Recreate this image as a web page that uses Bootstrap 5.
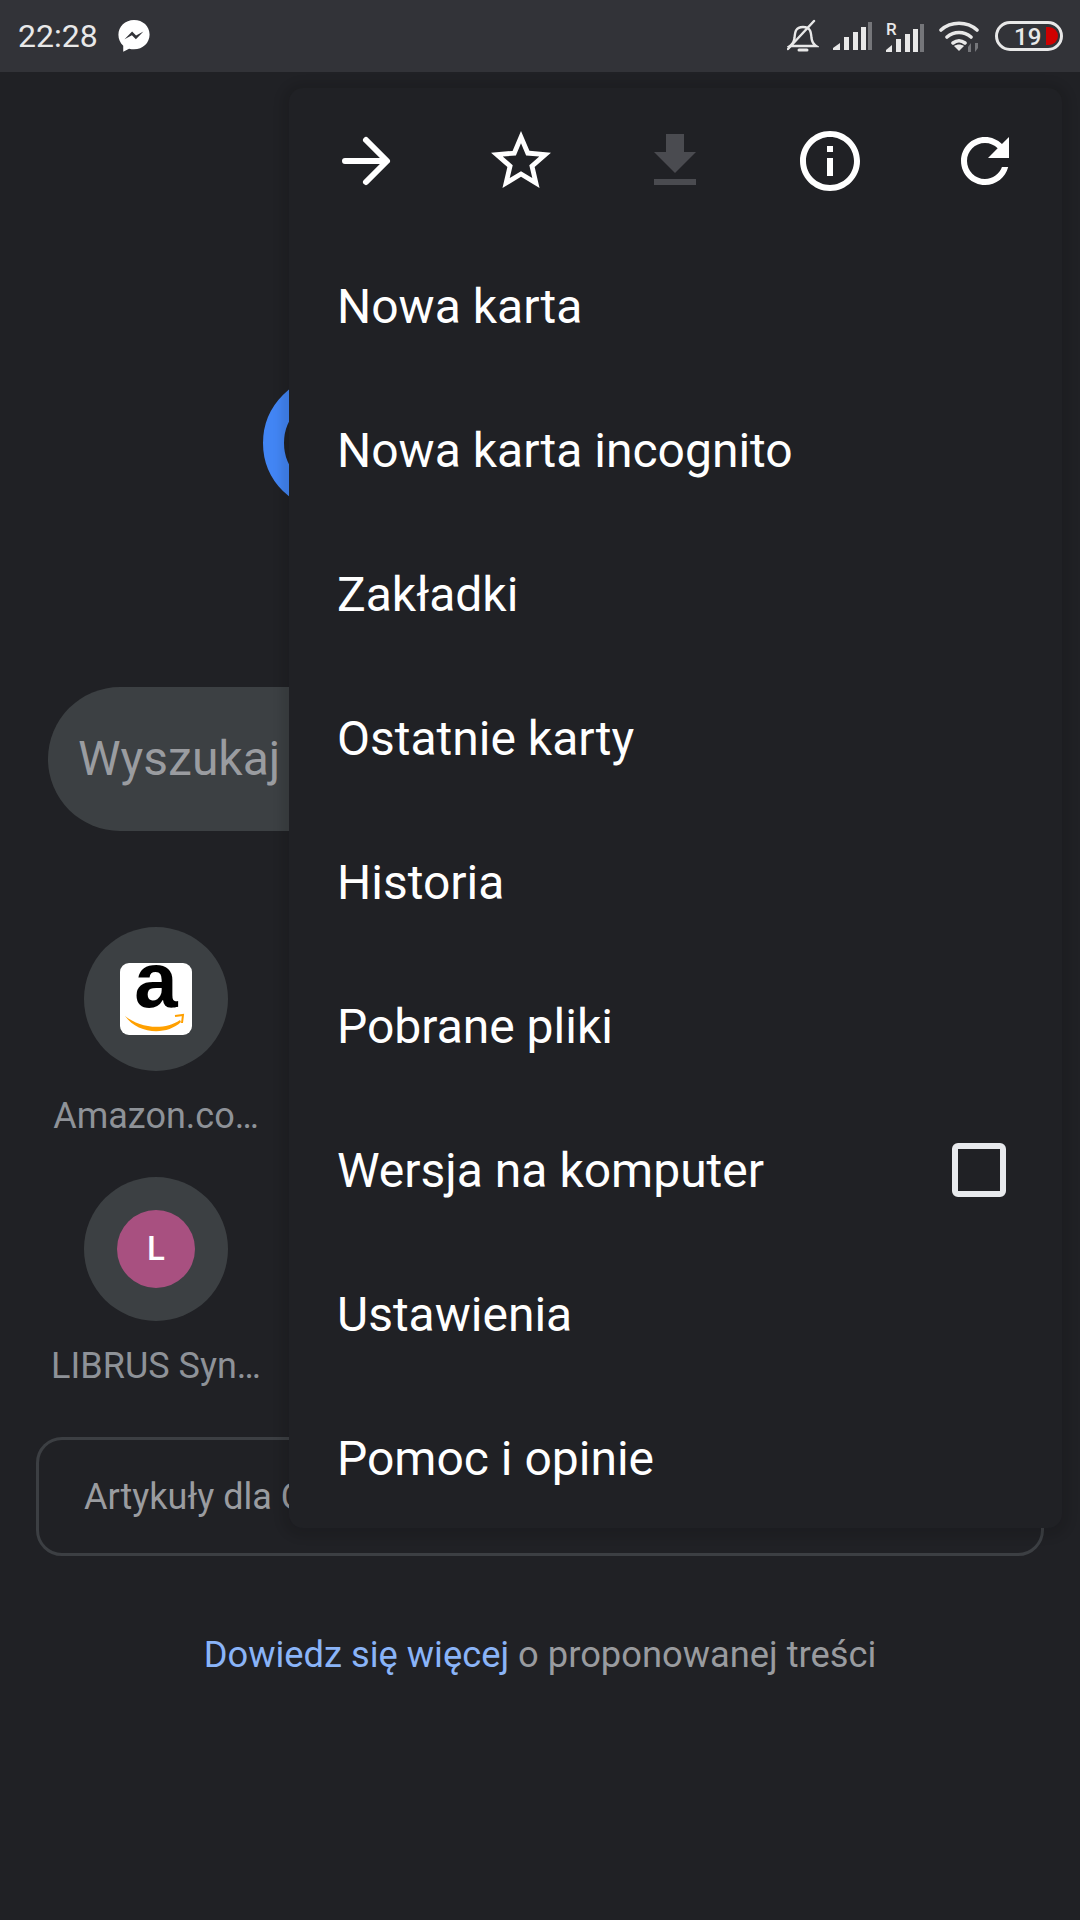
<!DOCTYPE html>
<html lang="pl">
<head>
<meta charset="utf-8">
<title>Chrome menu</title>
<link href="https://cdn.jsdelivr.net/npm/bootstrap@5.3.0/dist/css/bootstrap.min.css" rel="stylesheet">
<style>
  html, body { width: 1080px; height: 1920px; overflow: hidden; }
  body { background: #202125; font-family: Roboto, "Liberation Sans", sans-serif; position: relative; }

  .status-strip { height: 72px; background: #323338; color: #e8e8e8; padding: 0 17px 0 18px; }
  .status-time { font-size: 32px; line-height: 72px; width: 99px; }
  .status-icons { gap: 14px; }

  .home-col { padding: 303px 36px 0; }
  .logo-ring { display: block; margin-left: 227px; }
  .search-pill { height: 144px; margin: 176px 0 0 12px; width: 500px; border-radius: 72px; background: #3c4043; color: #9a9ca0; font-size: 48px; padding-left: 30px; }
  .tiles { margin: 96px 0 0 12px; width: 216px; }
  .tile { height: 250px; }
  .tile-round { width: 144px; height: 144px; border-radius: 50%; background: #3c4043; }
  .tile-name { font-size: 36px; line-height: 44px; margin-top: 23px; color: #8e9298; white-space: nowrap; }
  .amazon-box { width: 72px; height: 72px; border-radius: 9px; background: #fff; position: relative; }
  .amazon-a { font-family: "Liberation Sans", sans-serif; font-weight: 700; font-size: 78px; line-height: 41px; margin-top: -3px; color: #000; display: block; text-align: center; }
  .amazon-box svg { position: absolute; left: 0; top: 0; }
  .letter-round { width: 78px; height: 78px; border-radius: 50%; background: #a85080; color: #fff; font-size: 33px; font-weight: 500; }
  .articles-box { height: 119px; margin-top: 10px; border: 3px solid #3c3f43; border-radius: 26px; padding-left: 45px; color: #9a9ca0; font-size: 36px; }
  .learn-line { margin-top: 75px; font-size: 36.300px; line-height: 48px; color: #999b9f; }
  .learn-line a { color: #8ab4f8; text-decoration: none; }

  .chrome-menu { position: absolute; left: 289px; top: 88px; width: 773px; height: 1440px; background: #202125; border-radius: 14px; box-shadow: 0 2px 8px 8px rgba(0, 0, 0, .1); }
  .menu-tools { height: 146px; }
  .tool-btn { width: 155.400px; }
  .menu-row { height: 144px; padding: 2px 56px 0 48px; background: transparent; border: 0; border-radius: 0; color: #fff; font-size: 48px; }
  .menu-row .form-check-input { width: 54px; height: 54px; margin: -3px 0 0; background-color: transparent; border: 6px solid #e8eaed; border-radius: 6px; }
</style>
</head>
<body>

<div class="status-strip d-flex align-items-center justify-content-between">
  <div class="d-flex align-items-center">
    <span class="status-time">22:28</span>
    <svg width="34" height="34" viewBox="0 0 36 36">
      <path d="M18 1C8.600 1 1.500 7.800 1.500 16.700c0 4.700 1.900 8.700 5.100 11.500v6.600l6.200-3.400c1.600.5 3.400.7 5.200.7 9.400 0 16.500-6.800 16.500-15.700S27.400 1 18 1z" fill="#fff"/>
      <path d="M8 21.500l8-8.300 4.200 4.200 7.800-4.200-8 8.300-4.200-4.200z" fill="#323338"/>
    </svg>
  </div>
  <div class="status-icons d-flex align-items-center">
    <svg width="32" height="34" viewBox="0 0 32 34" fill="none" stroke="#e8e8e8" stroke-width="2.400">
      <path d="M3 27c3-2 4-4 4.500-8 .5-6 1-11 8.500-11s8 5 8.500 11c.5 4 1.500 6 4.500 8z"/>
      <path d="M1 30L27 2" stroke-linecap="round"/>
      <path d="M12 31h8" stroke-width="3" stroke-linecap="round"/>
    </svg>
    <svg width="39" height="28" viewBox="0 0 39 28">
      <path d="M0 28v-2l7-5v7z" fill="#e8e8e8"/><rect x="11" y="15" width="5" height="13" fill="#e8e8e8"/><rect x="20" y="10" width="5" height="18" fill="#e8e8e8"/><rect x="28" y="5" width="5" height="23" fill="#e8e8e8"/><rect x="35" y="0" width="4" height="28" fill="#75767a"/>
    </svg>
    <svg width="39" height="36" viewBox="0 0 39 36">
      <text x="0" y="17" font-family="Roboto, sans-serif" font-size="17" font-weight="500" fill="#e8e8e8">R</text>
      <path d="M0 34v-2l6-5v7z" fill="#e8e8e8"/><rect x="10" y="21" width="5" height="13" fill="#e8e8e8"/><rect x="19" y="16" width="5" height="18" fill="#e8e8e8"/><rect x="27" y="11" width="5" height="23" fill="#e8e8e8"/><rect x="34" y="6" width="4" height="28" fill="#75767a"/>
    </svg>
    <svg width="42" height="32" viewBox="0 0 42 32" fill="none">
      <path d="M2 10C12 1 28 1 38 10M8 17c7-6 17-6 24 0M14 23c4-3 8-3 12 0" stroke="#e8e8e8" stroke-width="3.600" stroke-linecap="round"/>
      <path d="M20 31l-5-5c3-2 7-2 10 0z" fill="#e8e8e8"/>
      <path d="M32 32v-9l-3 4v5zM36 23v9l3-4v-5z" fill="#75767a"/>
    </svg>
    <svg width="68" height="32" viewBox="0 0 68 32" class="d-block">
      <rect x="1.500" y="2.500" width="65" height="27" rx="13.500" fill="none" stroke="#e8e8e8" stroke-width="3"/>
      <path d="M51 7h3a9 9 0 0 1 0 18h-3z" fill="#cf0000"/>
      <text x="19" y="25" font-family="Roboto, sans-serif" font-size="24" font-weight="500" fill="#e8e8e8">19</text>
    </svg>
  </div>
</div>

<main class="home-col">
  <svg class="logo-ring" width="136" height="136" viewBox="0 0 136 136"><circle cx="68" cy="68" r="57.500" fill="none" stroke="#4285f4" stroke-width="21"/></svg>
  <div class="search-pill d-flex align-items-center">Wyszukaj</div>
  <div class="tiles">
    <div class="tile d-flex flex-column align-items-center">
      <div class="tile-round d-flex align-items-center justify-content-center flex-shrink-0">
        <div class="amazon-box">
          <span class="amazon-a">a</span>
          <svg width="72" height="72" viewBox="0 0 72 72" fill="none">
            <path d="M5 53C20 65 44 68 60 57L61 59C46 73 18 71 5 53z" fill="#ffa000"/>
            <path d="M55 53l8-1-1 8" stroke="#ffa000" stroke-width="2"/>
          </svg>
        </div>
      </div>
      <div class="tile-name">Amazon.co…</div>
    </div>
    <div class="tile d-flex flex-column align-items-center">
      <div class="tile-round d-flex align-items-center justify-content-center flex-shrink-0">
        <div class="letter-round d-flex align-items-center justify-content-center">L</div>
      </div>
      <div class="tile-name">LIBRUS Syn…</div>
    </div>
  </div>
  <div class="articles-box d-flex align-items-center">Artykuły dla Ciebie</div>
  <div class="learn-line text-center"><a href="#">Dowiedz się więcej</a> o proponowanej treści</div>
</main>

<div class="chrome-menu">
  <div class="menu-tools d-flex align-items-center">
    <div class="tool-btn d-flex justify-content-center">
      <svg width="72" height="72" viewBox="0 0 72 72" fill="none" stroke="#fff" stroke-width="6" stroke-linecap="round" stroke-linejoin="round"><path d="M15 36h41M36 15l21 21-21 21"/></svg>
    </div>
    <div class="tool-btn d-flex justify-content-center">
      <svg width="72" height="72" viewBox="0 0 24 24" fill="#fff"><path d="M22 9.240l-7.190-.62L12 2 9.190 8.630 2 9.240l5.460 4.730L5.820 21 12 17.270 18.180 21l-1.630-7.030L22 9.240zM12 15.400l-3.760 2.270 1-4.280-3.320-2.880 4.380-.38L12 6.100l1.710 4.040 4.380.38-3.320 2.880 1 4.280L12 15.400z"/></svg>
    </div>
    <div class="tool-btn d-flex justify-content-center">
      <svg width="72" height="72" viewBox="0 0 24 24" fill="#4a4b50"><path d="M19 9h-4V3H9v6H5l7 7 7-7zM5 18v2h14v-2H5z"/></svg>
    </div>
    <div class="tool-btn d-flex justify-content-center">
      <svg width="72" height="72" viewBox="0 0 24 24" fill="#fff"><path d="M11 17h2v-6h-2v6zm1-15C6.480 2 2 6.480 2 12s4.480 10 10 10 10-4.480 10-10S17.520 2 12 2zm0 18c-4.410 0-8-3.590-8-8s3.590-8 8-8 8 3.590 8 8-3.590 8-8 8zM11 9h2V7h-2v2z"/></svg>
    </div>
    <div class="tool-btn d-flex justify-content-center">
      <svg width="72" height="72" viewBox="0 0 24 24" fill="#fff"><path d="M17.650 6.350C16.200 4.900 14.210 4 12 4c-4.420 0-7.990 3.580-7.990 8s3.570 8 7.990 8c3.730 0 6.840-2.550 7.730-6h-2.080c-.82 2.330-3.040 4-5.650 4-3.310 0-6-2.690-6-6s2.690-6 6-6c1.660 0 3.140.69 4.220 1.780L13 11h7V4l-2.350 2.350z"/></svg>
    </div>
  </div>
  <div class="list-group list-group-flush">
    <div class="list-group-item menu-row d-flex align-items-center">Nowa karta</div>
    <div class="list-group-item menu-row d-flex align-items-center">Nowa karta incognito</div>
    <div class="list-group-item menu-row d-flex align-items-center">Zakładki</div>
    <div class="list-group-item menu-row d-flex align-items-center">Ostatnie karty</div>
    <div class="list-group-item menu-row d-flex align-items-center">Historia</div>
    <div class="list-group-item menu-row d-flex align-items-center">Pobrane pliki</div>
    <div class="list-group-item menu-row d-flex align-items-center justify-content-between">Wersja na komputer <input class="form-check-input" type="checkbox" aria-label="Wersja na komputer"></div>
    <div class="list-group-item menu-row d-flex align-items-center">Ustawienia</div>
    <div class="list-group-item menu-row d-flex align-items-center">Pomoc i opinie</div>
  </div>
</div>

</body>
</html>
